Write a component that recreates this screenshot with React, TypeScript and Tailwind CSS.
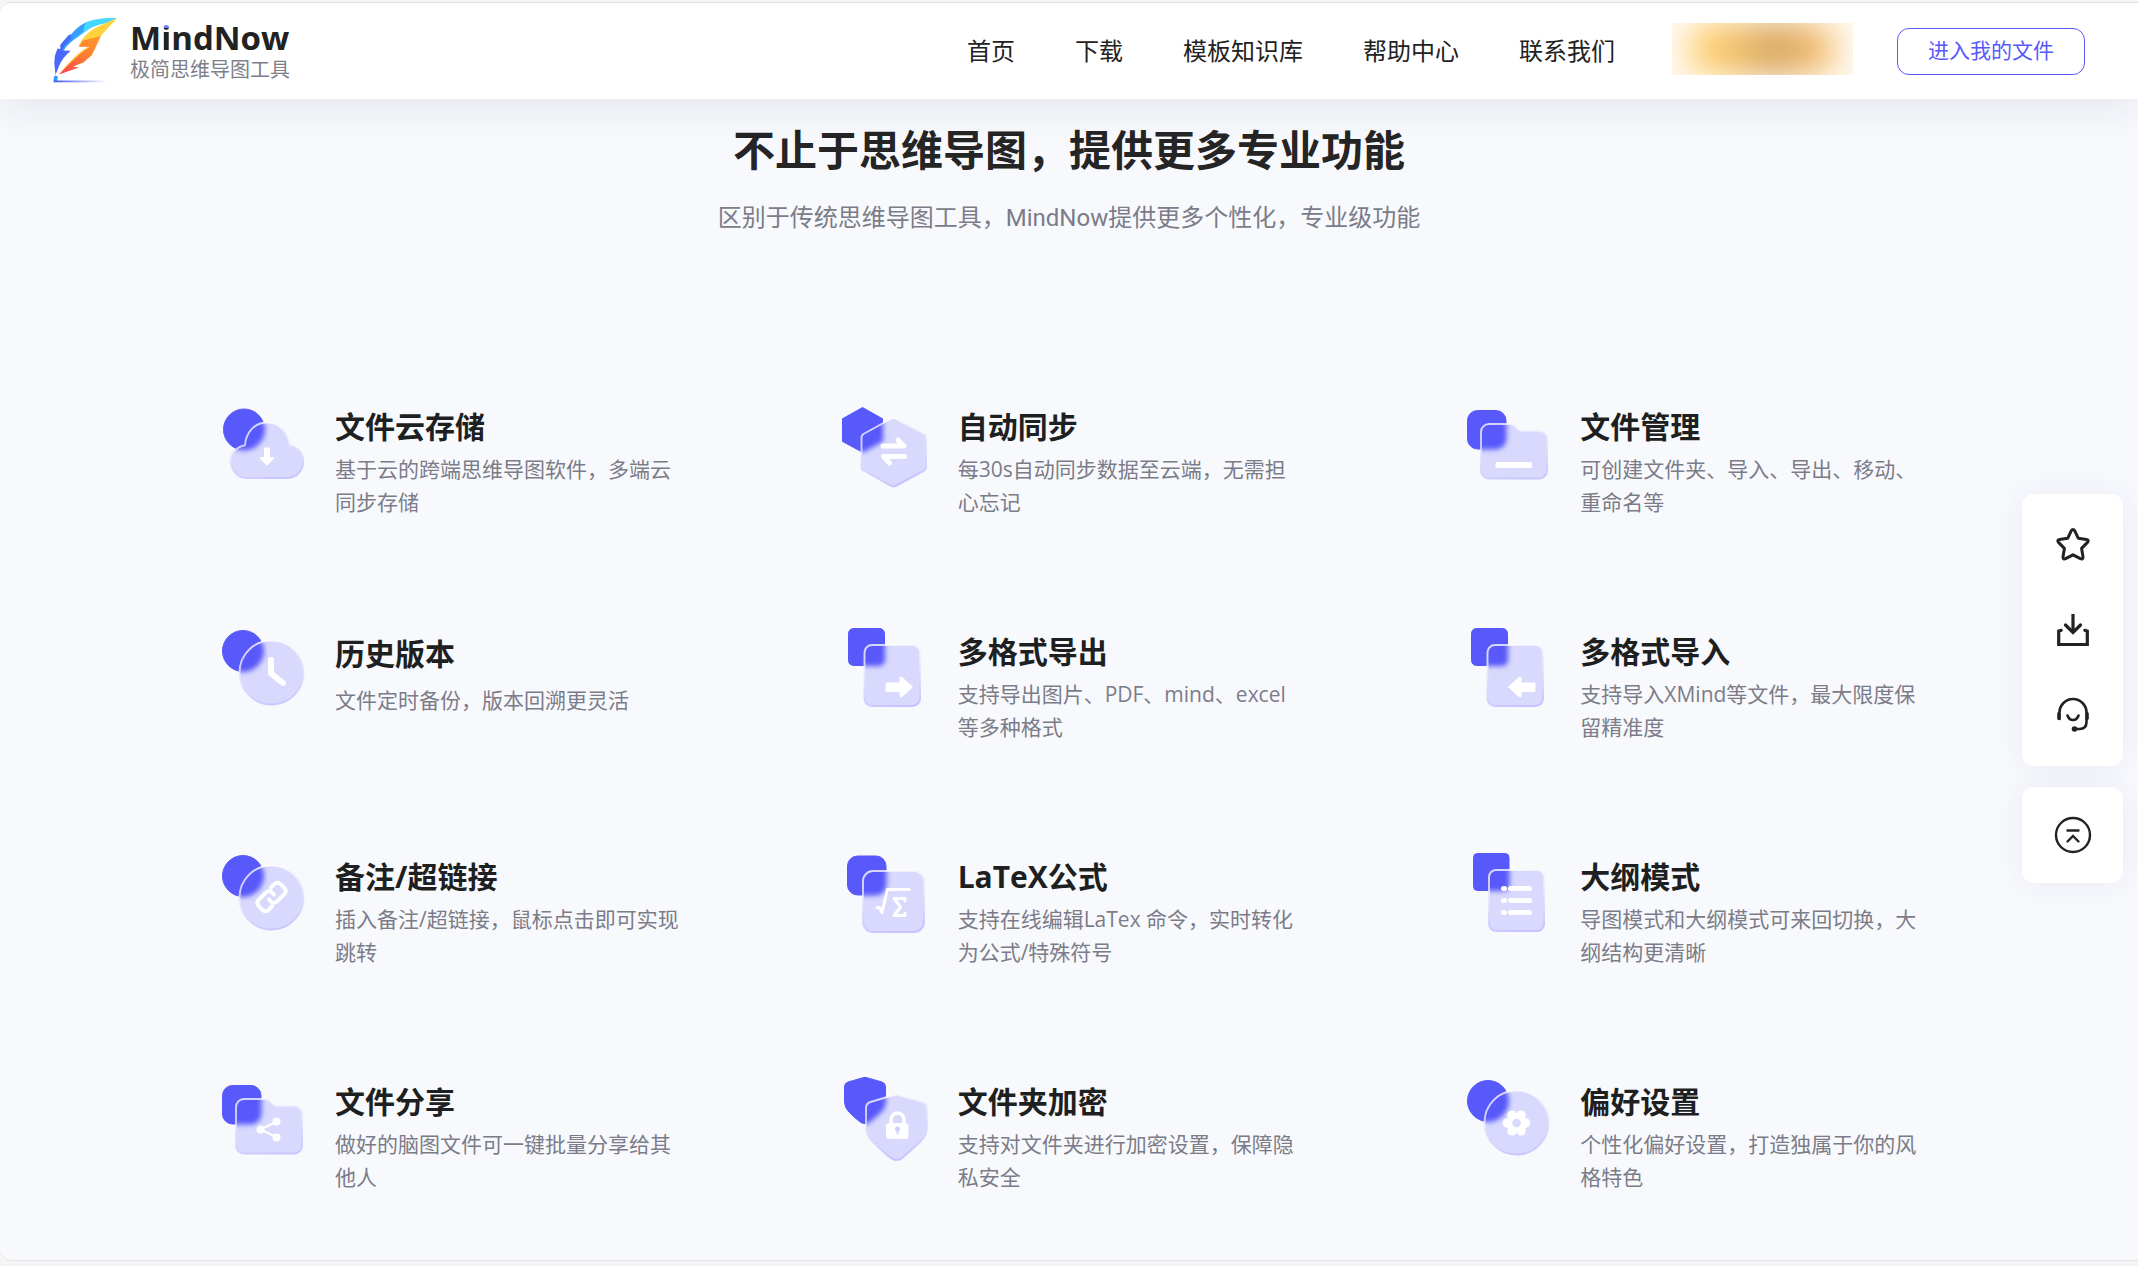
import { useId } from 'react';
import type { ReactNode } from 'react';

interface Feature {
  title: string;
  desc: string;
  icon: ReactNode;
  /** One-line descriptions sit slightly lower under their title. */
  short?: boolean;
}

interface GlassIconProps {
  back: ReactNode;
  front: ReactNode;
  children: ReactNode;
}

/**
 * Two-layer "frosted glass" icon: a solid shape behind a translucent one.
 * The part of the back shape under the glass is redrawn blurred.
 */
const GlassIcon = ({ back, front, children }: GlassIconProps) => {
  const id = useId();

  return (
    <svg viewBox="0 0 96 96" aria-hidden="true" className="h-24 w-24 shrink-0 overflow-visible">
      <defs>
        <clipPath id={`${id}c`}>{front}</clipPath>
        <filter id={`${id}b`} x="-30%" y="-30%" width="160%" height="160%">
          <feGaussianBlur stdDeviation="2.6" />
        </filter>
        <linearGradient id={`${id}g`} gradientUnits="userSpaceOnUse" x1="46" y1="14" x2="58" y2="80">
          <stop offset="0" stopColor="#ffffff" stopOpacity="0.75" />
          <stop offset="0.45" stopColor="#e3e3fe" stopOpacity="0.75" />
          <stop offset="1" stopColor="#c5c2ff" />
        </linearGradient>
      </defs>
      <g fill="#5859fb" stroke="#5859fb" strokeLinejoin="round">
        {back}
      </g>
      <g fill="#d8d9fd">{front}</g>
      <g clipPath={`url(#${id}c)`}>
        <g fill="#5859fb" stroke="#5859fb" filter={`url(#${id}b)`}>
          {back}
        </g>
      </g>
      <g fill="none" stroke={`url(#${id}g)`} strokeWidth="2" strokeLinejoin="round">
        {front}
      </g>
      {children}
    </svg>
  );
};

const smallCircle = <circle cx="24" cy="23" r="20.5" />;
const bigCircle = <circle cx="52.5" cy="44.5" r="32" />;
const softSquare = <rect x="3.5" y="7.5" width="38.5" height="38.5" rx="10" />;
const folder = (
  <path d="M25 21H46q3 0 5 2l3.500 3.500q2 1.500 4 1.500H75a8 8 0 0 1 8 8V67.500a8 8 0 0 1-8 8H25a8 8 0 0 1-8-8V29a8 8 0 0 1 8-8Z" />
);

const features: Feature[] = [
  {
    title: '文件云存储',
    desc: '基于云的跨端思维导图软件，多端云同步存储',
    icon: (
      <GlassIcon
        back={<circle cx="25" cy="26.5" r="20.5" />}
        front={
          <path d="M27 75A16.500 16.500 0 0 1 26 42.200C27 29 36 19.500 48 19.500S69 29 70 42.200A16.500 16.500 0 0 1 69 75Z" />
        }
      >
        <path
          d="M46 45.500h4V55h4l-6 6.500-6-6.500h4Z"
          fill="#fff"
          stroke="#fff"
          strokeWidth="2"
          strokeLinejoin="round"
        />
      </GlassIcon>
    ),
  },
  {
    title: '自动同步',
    desc: '每30s自动同步数据至云端，无需担心忘记',
    icon: (
      <GlassIcon
        back={<path d="M20.500 5 40 16V38L20.500 48.500 1 38V16Z" strokeWidth="2" />}
        front={
          <path d="M49.500 15.500q2-1.200 4 0L82 31q2 1 2 3.500V64q0 2.500-2 3.500L53.500 83q-2 1.200-4 0L21.500 67.500q-2-1-2-3.500V34.500q0-2.500 2-3.500Z" />
        }
      >
        <g fill="none" stroke="#fff" strokeWidth="5" strokeLinecap="round" strokeLinejoin="round">
          <path d="M41 43H62L56 37" />
          <path d="M62.500 53.500H41.500L47.500 60" />
        </g>
      </GlassIcon>
    ),
  },
  {
    title: '文件管理',
    desc: '可创建文件夹、导入、导出、移动、重命名等',
    icon: (
      <GlassIcon back={softSquare} front={folder}>
        <rect x="31.500" y="59" width="36.500" height="6" rx="1.500" fill="#fff" />
      </GlassIcon>
    ),
  },
  {
    title: '历史版本',
    desc: '文件定时备份，版本回溯更灵活',
    short: true,
    icon: (
      <GlassIcon back={smallCircle} front={bigCircle}>
        <path
          d="M52 32V45.500L64 55"
          fill="none"
          stroke="#fff"
          strokeWidth="6"
          strokeLinecap="round"
          strokeLinejoin="round"
        />
      </GlassIcon>
    ),
  },
  {
    title: '多格式导出',
    desc: '支持导出图片、PDF、mind、excel等多种格式',
    icon: (
      <GlassIcon
        back={<rect x="6.500" y="0.500" width="36" height="37" rx="5" />}
        front={<rect x="22.500" y="17" width="55.500" height="61" rx="7.500" />}
      >
        <path
          d="M45 56H59V50L69 59 59 68V62.500H45Z"
          fill="#fff"
          stroke="#fff"
          strokeWidth="3"
          strokeLinejoin="round"
        />
      </GlassIcon>
    ),
  },
  {
    title: '多格式导入',
    desc: '支持导入XMind等文件，最大限度保留精准度',
    icon: (
      <GlassIcon
        back={<rect x="7.500" y="0.500" width="36" height="37" rx="5" />}
        front={<rect x="23.500" y="17" width="55.500" height="61" rx="7.500" />}
      >
        <path
          d="M70 56H56V50L46 59 56 68V62.500H70Z"
          fill="#fff"
          stroke="#fff"
          strokeWidth="3"
          strokeLinejoin="round"
        />
      </GlassIcon>
    ),
  },
  {
    title: '备注/超链接',
    desc: '插入备注/超链接，鼠标点击即可实现跳转',
    icon: (
      <GlassIcon back={smallCircle} front={bigCircle}>
        <g
          transform="translate(52.500 44) rotate(-45)"
          fill="none"
          stroke="#fff"
          strokeWidth="4"
          strokeLinecap="round"
          strokeLinejoin="round"
        >
          <path d="M6-7H11.500a4 4 0 0 1 4 4V3a4 4 0 0 1-4 4H0.500a4 4 0 0 1-4-4V0" />
          <path d="M-6 7H-11.500a4 4 0 0 1-4-4V-3a4 4 0 0 1 4-4H-0.500a4 4 0 0 1 4 4V0" />
        </g>
      </GlassIcon>
    ),
  },
  {
    title: 'LaTeX公式',
    desc: '支持在线编辑LaTex 命令，实时转化为公式/特殊符号',
    icon: (
      <GlassIcon
        back={<rect x="5.500" y="3" width="38.500" height="39" rx="10" />}
        front={<rect x="21" y="18" width="61" height="61" rx="10" />}
      >
        <g fill="none" stroke="#fff" strokeWidth="3" strokeLinecap="round" strokeLinejoin="round">
          <path d="M35 54.500H37.500L40 59.500 45.500 36.500H67.500" />
          <path d="M63 48V45.500H52L58.500 54 52 62.500H63V60" />
        </g>
      </GlassIcon>
    ),
  },
  {
    title: '大纲模式',
    desc: '导图模式和大纲模式可来回切换，大纲结构更清晰',
    icon: (
      <GlassIcon
        back={<rect x="9.500" y="0.500" width="35.500" height="37" rx="4" />}
        front={<rect x="25" y="17" width="55" height="61" rx="7" />}
      >
        <g stroke="#fff" strokeWidth="5" strokeLinecap="round">
          <path d="M39.500 35.500h1M46.500 35.500H65.500" />
          <path d="M39.500 47.500h1M46.500 47.500H65.500" />
          <path d="M39.500 59.500h1M46.500 59.500H65.500" />
        </g>
      </GlassIcon>
    ),
  },
  {
    title: '文件分享',
    desc: '做好的脑图文件可一键批量分享给其他人',
    icon: (
      <GlassIcon back={softSquare} front={folder}>
        <path d="M58 43.500 41.500 51.500 58 59.500" fill="none" stroke="#fff" strokeWidth="2" />
        <g fill="#fff">
          <circle cx="41.500" cy="51.500" r="4" />
          <circle cx="57.500" cy="43.500" r="4" />
          <circle cx="57.500" cy="59.500" r="4" />
        </g>
      </GlassIcon>
    ),
  },
  {
    title: '文件夹加密',
    desc: '支持对文件夹进行加密设置，保障隐私安全',
    icon: (
      <GlassIcon
        back={
          <path d="M21-.3q2-.7 4 0L40 4q3.500 1.200 3.500 5V24q0 6-5 10.500T27 44.500q-4 2.500-8 0T7.500 34.500Q2.500 30 2.500 24V9q0-3.800 3.500-5Z" />
        }
        front={
          <path d="M52 17q2.500-.8 5 0L80.500 24q4.500 1.500 4.500 6V49q0 8.500-7 15T60 80q-5.500 4-11 0T31 64q-7-6.500-7-15V30q0-4.500 4.500-6Z" />
        }
      >
        <path
          d="M49 46V41.500a6.500 6.500 0 0 1 13 0V46"
          fill="none"
          stroke="#fff"
          strokeWidth="3.500"
        />
        <rect x="44" y="45" width="22.500" height="16" rx="3.500" fill="#fff" />
        <circle cx="55.500" cy="51" r="2.500" fill="#d0d1fd" />
        <path d="M55.500 52V55.500" stroke="#d0d1fd" strokeWidth="2" strokeLinecap="round" />
      </GlassIcon>
    ),
  },
  {
    title: '偏好设置',
    desc: '个性化偏好设置，打造独属于你的风格特色',
    icon: (
      <GlassIcon back={smallCircle} front={bigCircle}>
        <g fill="#fff">
          <circle cx="52.500" cy="45" r="10" />
          <circle cx="61.500" cy="45" r="4.800" />
          <circle cx="57" cy="52.800" r="4.800" />
          <circle cx="48" cy="52.800" r="4.800" />
          <circle cx="43.500" cy="45" r="4.800" />
          <circle cx="48" cy="37.200" r="4.800" />
          <circle cx="57" cy="37.200" r="4.800" />
        </g>
        <circle cx="52.500" cy="45" r="4.300" fill="#d8d9fd" />
      </GlassIcon>
    ),
  },
];

const navItems = ['首页', '下载', '模板知识库', '帮助中心', '联系我们'];

const FeatherLogo = () => (
  <svg viewBox="0 0 65 66" aria-hidden="true" className="h-[66px] w-[65px]">
    <defs>
      <linearGradient id="quill-line" x1="0" x2="1">
        <stop offset="0" stopColor="#3f5bf6" />
        <stop offset="1" stopColor="#3f5bf6" stopOpacity="0" />
      </linearGradient>
      <linearGradient id="quill-warm" x1="1" y1="0" x2="0.200" y2="1">
        <stop offset="0" stopColor="#ff9a2b" />
        <stop offset="0.550" stopColor="#ff7a33" />
        <stop offset="1" stopColor="#ff4a50" />
      </linearGradient>
    </defs>
    {/* cool outer edge */}
    <path d="M64 0C52-.2 40 1 32 4.700L27.500 13Q24 17 18 24L30 15.500Q40 7 53.500 5Z" fill="#45d7ff" />
    <path d="M32.500 4.500Q24 9 18 16.500L15.500 17 7.500 26.500 8 37 13 29Q20 21 30 14Z" fill="#379dff" />
    <path d="M17.500 16 10 24 7.300 27.500 7.500 31 4.500 30.500 1.800 38 1.300 45 2.500 57 6 48Q9 40 17.700 32.700L9 32.500Q13 25 18 21Z" fill="#4a68fb" />
    {/* warm inner edge */}
    <path d="M64 .5Q56 3 40 11.300 34 15 28.700 22L25.300 28.500 35 28.500Q20 38 5.300 57L28 36 47.500 18Z" fill="#ffd23d" />
    <path d="M48 18 30 22.500 26 28.700H36.500Q24 37 6 56.500L26 49.500 20 48.500 30.500 44.500 39 37Z" fill="url(#quill-warm)" />
    {/* nib and ink line */}
    <path d="M1.500 57.500 5 58.500 4 63.500H.7V60Z" fill="#2f9bff" />
    <rect x="0.700" y="62.500" width="53" height="1.800" fill="url(#quill-line)" />
  </svg>
);

const Header = () => (
  <header className="relative z-10 flex h-24 items-center justify-between bg-white px-[53px] shadow-[0_8px_44px_rgba(30,30,60,0.09)]">
    <a href="#" className="flex items-center gap-3">
      <FeatherLogo />
      <span className="flex flex-col gap-0.5">
        <span className="font-['Open_Sans','Noto_Sans',sans-serif] text-[33px] leading-9 font-bold text-[#222]">
          M
          <span className="bg-linear-to-b from-[#6b7bff] from-30% to-[#222] to-30% bg-clip-text text-transparent">
            i
          </span>
          ndNow
        </span>
        <span className="text-xl leading-6 text-[#7d7f8a]">极简思维导图工具</span>
      </span>
    </a>

    <div className="flex items-center">
      <nav className="flex gap-[60px] text-2xl text-[#222]">
        {navItems.map((item) => (
          <a key={item} href="#">
            {item}
          </a>
        ))}
      </nav>

      {/* Promo badge, blurred out */}
      <button
        type="button"
        aria-label="会员"
        className="relative mb-1 ml-[57px] h-[52px] w-[181px] overflow-hidden bg-[#fffaf1]"
      >
        <span className="absolute inset-x-4 inset-y-0 rounded-3xl bg-linear-to-r from-[#ffcf70] from-15% via-[#d6a25c] via-60% to-[#ffca7c] blur-lg" />
      </button>

      <button
        type="button"
        className="ml-11 h-[47px] rounded-xl border border-[#5859fb] px-[30px] text-[21px] text-[#5859fb]"
      >
        进入我的文件
      </button>
    </div>
  </header>
);

const FeatureItem = ({ feature }: { feature: Feature }) => (
  <article className="flex gap-5 pl-[84px]">
    {feature.icon}
    <div className={feature.short ? 'flex flex-col gap-1 pt-0.5' : 'flex flex-col'}>
      <h3 className="text-3xl leading-[48px] font-bold text-[#1e1f21]">{feature.title}</h3>
      <p className="mt-0.5 w-[346px] text-[21px] leading-[33px] text-[#7b7c88]">{feature.desc}</p>
    </div>
  </article>
);

const SideTools = () => (
  <aside className="absolute top-[491px] right-[15px] z-20 flex w-[101px] flex-col gap-[21px] text-[#222]">
    <div className="flex flex-col items-center gap-[49px] rounded-xl bg-white py-[33px] shadow-[0_0_30px_rgba(40,60,110,0.07)]">
      <button type="button" aria-label="收藏" className="h-9 w-9">
        <svg viewBox="0 0 36 36" fill="none" stroke="currentColor" strokeWidth="3" strokeLinejoin="round">
          <path d="M16.200 3.800q1.800-2.600 3.600 0l3.400 7.400 8.200 1.200q3 .7 1.100 3l-5.900 6 1.400 8.400q.1 2.800-2.600 1.900L18 27.800l-7.400 3.900q-2.700.9-2.600-1.900l1.400-8.400-5.900-6q-1.900-2.300 1.100-3l8.200-1.200Z" />
        </svg>
      </button>
      <button type="button" aria-label="下载" className="h-9 w-9">
        <svg viewBox="0 0 36 36" fill="none" stroke="currentColor" strokeWidth="3.200">
          <path d="M18 2V20" />
          <path d="M10.500 13 18 20.500 25.500 13" strokeLinecap="round" />
          <path d="M6.200 18.300 3.700 19.200V32.500H32.300V19.200L29.800 18.300" strokeLinecap="round" />
        </svg>
      </button>
      <button type="button" aria-label="客服" className="h-9 w-9">
        <svg viewBox="0 0 36 36" fill="none" stroke="currentColor" strokeWidth="2.600" strokeLinecap="round">
          <path d="M4.500 22V15.500a13.500 13.500 0 0 1 27 0V25q0 7-7 7H20" />
          <path d="M3.800 16.500V21.500M32.200 16.500V21.500" strokeWidth="3.200" />
          <path d="M12.500 18.500q1.500 4.500 5.500 4.500t5.500-4.500" />
          <circle cx="19.500" cy="32" r="2.800" fill="currentColor" stroke="none" />
        </svg>
      </button>
    </div>

    <div className="flex justify-center rounded-xl bg-white py-[30px] shadow-[0_0_30px_rgba(40,60,110,0.07)]">
      <button type="button" aria-label="回到顶部" className="h-9 w-9">
        <svg viewBox="0 0 36 36" fill="none" stroke="currentColor" strokeWidth="2.400" className="overflow-visible">
          <circle cx="18" cy="18" r="17" />
          <path d="M12.500 13.500H23.500M12.500 24.500 18 19 23.500 24.500" strokeLinecap="round" />
        </svg>
      </button>
    </div>
  </aside>
);

export default function App() {
  return (
    <div className="min-h-screen bg-[#f5f5f5] pt-0.5 font-['Open_Sans','Noto_Sans_CJK_SC',sans-serif]">
      <div className="relative overflow-hidden rounded-l-xl border-y border-[#e0e1e3] bg-[#f8f9fd]">
        <Header />

        <main className="px-[135px] pt-[21px] pb-[66px]">
          <div className="text-center">
            <h2 className="text-[42px] leading-[60px] font-bold text-[#252525]">
              不止于思维导图，提供更多专业功能
            </h2>
            <p className="mt-5 font-['Roboto','Noto_Sans_CJK_SC',sans-serif] text-2xl leading-9 text-[#7b7c88]">
              区别于传统思维导图工具，MindNow提供更多个性化，专业级功能
            </p>
          </div>

          <section className="mt-[167px] grid grid-cols-3 gap-y-[109px]">
            {features.map((feature) => (
              <FeatureItem key={feature.title} feature={feature} />
            ))}
          </section>
        </main>

        <SideTools />
      </div>
    </div>
  );
}
